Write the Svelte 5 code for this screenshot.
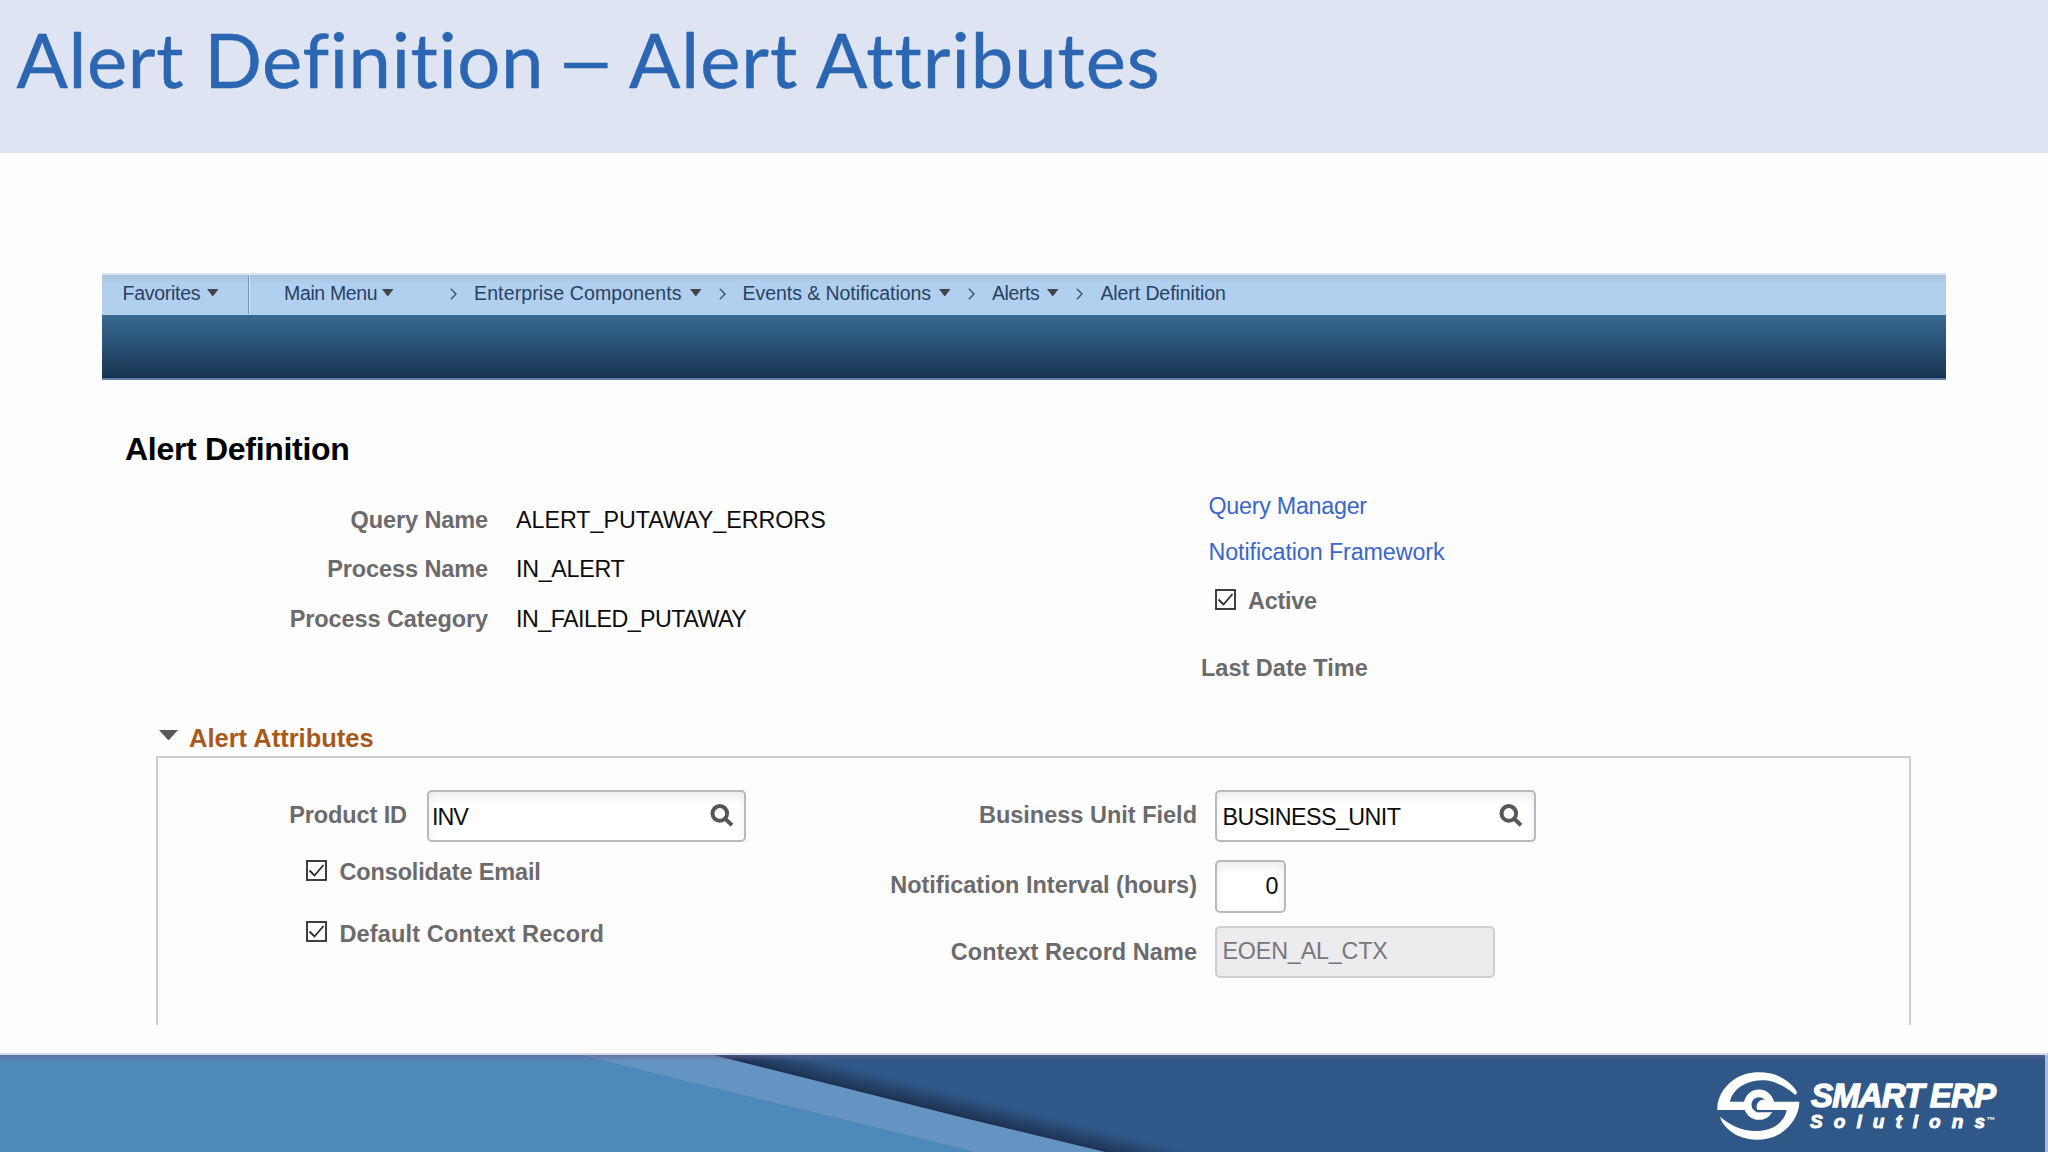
<script lang="ts">
  interface Crumb {
    label: string;
    menu: boolean;
    spacing: number;
  }

  const crumbs: Crumb[] = [
    { label: 'Enterprise Components', menu: true, spacing: 0.13 },
    { label: 'Events & Notifications', menu: true, spacing: -0.06 },
    { label: 'Alerts', menu: true, spacing: -0.4 },
    { label: 'Alert Definition', menu: false, spacing: -0.09 },
  ];

  const summary = [
    { label: 'Query Name', value: 'ALERT_PUTAWAY_ERRORS', spacing: -0.03 },
    { label: 'Process Name', value: 'IN_ALERT', spacing: -0.3 },
    { label: 'Process Category', value: 'IN_FAILED_PUTAWAY', spacing: -0.54 },
  ];

  let active = $state(true);
  let consolidate = $state(true);
  let defaultContext = $state(true);
  let productId = $state('INV');
  let businessUnit = $state('BUSINESS_UNIT');
  let interval = $state('0');
  let open = $state(true);
</script>

{#snippet caret()}
  <svg class="caret" viewBox="0 0 12 8" preserveAspectRatio="none"><path d="M0 0h12L6 8z" /></svg>
{/snippet}

{#snippet check(on: boolean)}
  <svg class="check" viewBox="0 0 21 21">
    <rect x="1" y="1" width="19" height="19" />
    {#if on}<path d="M3.5 10.5l5 5L17.5 5" />{/if}
  </svg>
{/snippet}

{#snippet lookup()}
  <svg class="lookup" viewBox="0 0 24 23">
    <circle cx="9.8" cy="9.4" r="7.3" />
    <path d="M15 14.6l7 6.6" />
  </svg>
{/snippet}

<div class="slide">
  <header>
    <h1><span>Alert Definition</span> <span class="dash">–</span> <span>Alert Attributes</span></h1>
  </header>

  <main>
    <nav>
      <a class="favorites" href="#favorites"><span>Favorites</span>{@render caret()}</a>
      <a class="main-menu" href="#menu"><span>Main Menu</span>{@render caret()}</a>
      {#each crumbs as crumb}
        <svg class="chevron" viewBox="0 0 7 12"><path d="M.8.8L6 6 .8 11.2" /></svg>
        <a href="#crumb">
          <span style="letter-spacing: {crumb.spacing}px">{crumb.label}</span>
          {#if crumb.menu}{@render caret()}{/if}
        </a>
      {/each}
    </nav>
    <div class="banner"></div>

    <h2>Alert Definition</h2>

    <div class="summary">
      <dl>
        {#each summary as row}
          <dt>{row.label}</dt>
          <dd style="letter-spacing: {row.spacing}px">{row.value}</dd>
        {/each}
      </dl>
      <div class="side">
        <a class="query" href="#query">Query Manager</a>
        <a class="framework" href="#framework">Notification Framework</a>
        <button class="toggle active" onclick={() => (active = !active)}>{@render check(active)}<span>Active</span></button>
        <div class="last">Last Date Time</div>
      </div>
    </div>

    <button class="section-title" onclick={() => (open = !open)}>{@render caret()}<span>Alert Attributes</span></button>
    {#if open}
      <section>
        <div class="col">
          <label class="field product">
            <span>Product ID</span>
            <div class="box"><input class="inv" bind:value={productId} />{@render lookup()}</div>
          </label>
          <button class="toggle" onclick={() => (consolidate = !consolidate)}>{@render check(consolidate)}<span>Consolidate Email</span></button>
          <button class="toggle wide" onclick={() => (defaultContext = !defaultContext)}>{@render check(defaultContext)}<span>Default Context Record</span></button>
        </div>
        <div class="col right">
          <label class="field unit">
            <span>Business Unit Field</span>
            <div class="box"><input class="bu" bind:value={businessUnit} />{@render lookup()}</div>
          </label>
          <label class="field interval">
            <span>Notification Interval (hours)</span>
            <div class="box"><input bind:value={interval} /></div>
          </label>
          <label class="field context">
            <span>Context Record Name</span>
            <div class="box"><input value="EOEN_AL_CTX" disabled /></div>
          </label>
        </div>
      </section>
    {/if}
  </main>

  <footer>
    <svg viewBox="0 1053 2048 99" width="2048" height="99">
      <defs>
        <linearGradient id="shade" gradientUnits="userSpaceOnUse" x1="968" y1="1119" x2="973" y2="1099">
          <stop offset="0" stop-color="#1d3150" />
          <stop offset="0.4" stop-color="#243f65" />
          <stop offset="1" stop-color="#2f5787" />
        </linearGradient>
        <linearGradient id="rim" x1="0" y1="0" x2="0" y2="1">
          <stop offset="0" stop-color="#6a5f92" stop-opacity="0.6" />
          <stop offset="1" stop-color="#6a5f92" stop-opacity="0" />
        </linearGradient>
      </defs>
      <rect x="0" y="1053" width="2048" height="2" fill="#cfdcee" />
      <rect x="0" y="1055" width="2045" height="97" fill="#2f5787" />
      <path d="M713 1055H815L1205 1152H1105L968 1119 817 1081Z" fill="url(#shade)" />
      <path d="M0 1055H713L817 1081 968 1119 1105 1152H0Z" fill="#6694c2" />
      <path d="M0 1055H582Q650 1072 715 1088L854 1122 976 1152H0Z" fill="#4f89b8" />
      <rect x="0" y="1055" width="2045" height="6" fill="url(#rim)" />
      <rect x="2045" y="1055" width="3" height="97" fill="#a9bdd0" />

      <g transform="translate(1700 1060) scale(0.33333)">
        <circle cx="177" cy="134" r="34" fill="none" stroke="#fff" stroke-width="23" />
        <path d="M172 150H232V157H168Z" fill="#2f5787" />
        <path d="M52 150C50 108 78 72 112 52C145 34 200 31 235 48C262 61 284 80 291 97Q291 104 285 104C262 84 232 65 195 61C160 58 125 72 107 92C97 103 91 114 90 125H140V150Z" fill="#fff" />
        <path d="M172 150L190 125H298C299 160 275 200 240 221C205 242 155 245 118 229C88 216 66 193 60 170C94 198 122 210 160 213C200 214 228 202 243 184C254 171 259 160 260 150Z" fill="#fff" />
        <path d="M172 150C166 138 172 124 186 119L200 119V130Z" fill="#fff" />
      </g>
      <text class="brand" x="1811" y="1107.3">SMART ERP</text>
      <text class="sub" x="1810" y="1127.6" textLength="175" lengthAdjust="spacing">Solutions</text>
      <text class="tm" x="1986" y="1123">™</text>
    </svg>
  </footer>
</div>

<style>
  :global(body) {
    margin: 0;
  }

  .slide {
    display: flex;
    flex-direction: column;
    width: 2048px;
    height: 1152px;
    overflow: hidden;
    background: #fdfdfe;
    font-family: "Liberation Sans", Arial, sans-serif;
    font-size: 23.3px;
    color: #0c0c0c;
  }

  header {
    box-sizing: border-box;
    height: 153px;
    padding: 12px 0 0 16.5px;
    background: #dee4f2;
  }

  h1 {
    display: flex;
    gap: 20px;
    margin: 0;
    font: 400 76px/94px Lato, sans-serif;
    letter-spacing: 0.65px;
    color: #2a66b1;
    -webkit-text-stroke: 0.5px #2a66b1;
    white-space: nowrap;
  }

  h1 span:last-child {
    letter-spacing: 1px;
  }

  .dash {
    transform: scaleX(1.4);
  }

  main {
    flex: 1;
    padding: 120px 102px 0;
  }

  a {
    text-decoration: none;
  }

  button {
    padding: 0;
    border: 0;
    background: none;
    font: inherit;
    color: inherit;
    cursor: pointer;
  }

  nav {
    display: flex;
    box-sizing: border-box;
    height: 42px;
    border-top: 2px solid #dbe5f0;
    background: linear-gradient(#a9c4df 0, #b1cfef 9px, #b1cfef 100%);
    font-size: 19.5px;
    line-height: 36px;
  }

  nav a {
    display: flex;
    align-items: center;
    gap: 8px;
    height: 35px;
    color: #274263;
  }

  .caret {
    width: 11.5px;
    height: 7.5px;
    fill: #424449;
  }

  nav .favorites {
    box-sizing: border-box;
    width: 147px;
    height: 38px;
    margin-top: 1px;
    padding: 0 0 5px 20.5px;
    gap: 6.5px;
    border-right: 1px solid #7695b5;
    box-shadow: 1px 0 #d6e8fb;
    letter-spacing: -0.27px;
  }

  nav .main-menu {
    width: 148.5px;
    padding-left: 35px;
    gap: 5px;
    letter-spacing: -0.35px;
  }

  .chevron {
    width: 7px;
    height: 12px;
    margin: 13px 17px 0 17.5px;
    fill: none;
    stroke: #3b5472;
    stroke-width: 1.4;
  }

  .banner {
    height: 63px;
    border-bottom: 2px solid #5f82a8;
    background: linear-gradient(#386a90, #2b5377 45%, #183654 95%, #142c4e);
  }

  h2 {
    margin: 45px 0 11px 23px;
    font-size: 32px;
    line-height: 48px;
    letter-spacing: -0.3px;
    color: #000;
  }

  .summary {
    display: grid;
    grid-template-columns: 1099px 1fr;
    height: 206px;
  }

  dl {
    display: grid;
    grid-template-columns: 386px 1fr;
    grid-auto-rows: 49.3px;
    column-gap: 28px;
    margin: 0;
    padding-top: 12px;
    line-height: 49.3px;
  }

  dt,
  .toggle,
  .last,
  .field > span {
    font-size: 23.5px;
    font-weight: bold;
    color: #6b6b6d;
  }

  dt {
    text-align: right;
    letter-spacing: -0.1px;
  }

  dd {
    margin: 0;
  }

  .side {
    display: flex;
    flex-direction: column;
    line-height: 45.8px;
  }

  .side a {
    padding-left: 7.5px;
    color: #3a66c8;
  }

  .query {
    letter-spacing: -0.27px;
  }

  .framework {
    letter-spacing: -0.1px;
  }

  .toggle {
    display: flex;
    align-items: center;
    gap: 12.5px;
    height: 40px;
    margin: 11px 0 0 148px;
    letter-spacing: -0.15px;
  }

  .toggle.wide {
    margin-top: 21.5px;
    letter-spacing: 0.15px;
  }

  .toggle.active {
    height: 45.3px;
    margin: 4px 0 0 13.5px;
    letter-spacing: -0.3px;
  }

  .check {
    width: 21px;
    height: 21px;
    margin-bottom: 5px;
    fill: none;
    stroke: #2b2b2e;
    stroke-width: 1.8;
  }

  .last {
    margin-top: 21.6px;
  }

  .section-title {
    display: flex;
    align-items: center;
    gap: 11px;
    height: 36px;
    margin: 30px 0 0 57px;
    font-size: 25.5px;
    font-weight: bold;
    color: #a8591c;
  }

  .section-title .caret {
    width: 19px;
    height: 10.5px;
    margin-bottom: 6px;
    fill: #58595b;
  }

  section {
    display: grid;
    grid-template-columns: 650px 1fr;
    box-sizing: border-box;
    width: 1755px;
    height: 269px;
    margin-left: 54px;
    padding-top: 31.5px;
    border: 2px solid #cdcdcf;
    border-bottom: 0;
  }

  .field {
    display: flex;
    align-items: center;
    gap: 20px;
  }

  .field > span {
    width: 249px;
    text-align: right;
    letter-spacing: -0.1px;
  }

  .right .field {
    gap: 18px;
  }

  .right .field > span {
    width: 389px;
    letter-spacing: 0;
  }

  .box {
    display: flex;
    align-items: center;
    box-sizing: border-box;
    width: 319px;
    height: 52px;
    padding: 0 10px 0 3px;
    border: 2px solid #b8b8bd;
    border-radius: 5px;
    background: #fff;
    box-shadow: inset 0 5px 8px #ececf0;
  }

  .unit .box {
    width: 320.5px;
    padding: 0 11px 0 5.5px;
  }

  input {
    flex: 1;
    min-width: 0;
    padding: 3px 0 0;
    border: 0;
    outline: 0;
    background: none;
    font: inherit;
    color: #0c0c0c;
  }

  .inv {
    letter-spacing: -1px;
  }

  .bu {
    letter-spacing: -0.55px;
  }

  .interval {
    margin-top: 18px;
  }

  .field.interval > span {
    padding-bottom: 2px;
  }

  .interval .box {
    width: 70.5px;
    height: 53.5px;
    padding: 0 5px 0 2px;
  }

  .interval input {
    padding-top: 1px;
    text-align: right;
  }

  .context {
    margin-top: 12.5px;
  }

  .field.context > span {
    padding-top: 1.5px;
    letter-spacing: 0.04px;
  }

  .context .box {
    width: 279.5px;
    padding-left: 5.5px;
    border-color: #cfcfd2;
    background: #ecebed;
    box-shadow: none;
  }

  .context input {
    padding: 0 0 1px;
    letter-spacing: -0.17px;
    color: #77777a;
  }

  .lookup {
    width: 24px;
    height: 23px;
    margin-bottom: 1px;
    fill: none;
    stroke: #57575a;
    stroke-width: 4;
  }

  footer {
    height: 99px;
  }

  footer svg {
    display: block;
  }

  .brand,
  .sub {
    font-weight: bold;
    font-style: italic;
    fill: #fff;
    stroke: #fff;
  }

  .brand {
    font-size: 33px;
    letter-spacing: -0.85px;
    word-spacing: -2px;
    stroke-width: 1.3px;
  }

  .sub {
    font-size: 19px;
    stroke-width: 0.9px;
  }

  .tm {
    font-size: 9px;
    font-weight: bold;
    fill: #fff;
  }
</style>
